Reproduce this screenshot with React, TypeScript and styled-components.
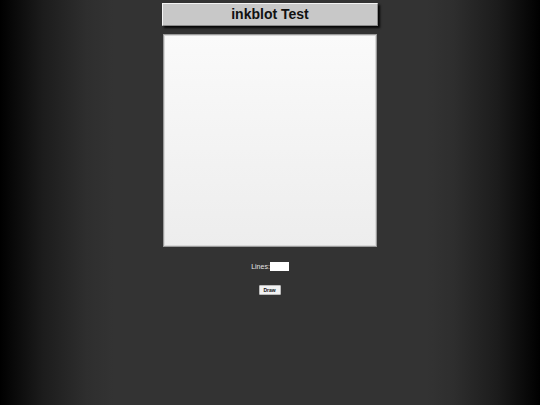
import styled, { createGlobalStyle } from 'styled-components';

const GlobalStyle = createGlobalStyle`
    html, body {
        margin: 0;
        padding: 0;
        min-height: 100%;
    }
    body {
        height: 405px;
        background: linear-gradient(
            to right,
            #000 0%,
            #1c1c1c 8%,
            #2e2e2e 16%,
            #333 21%,
            #333 79%,
            #2e2e2e 84%,
            #1c1c1c 92%,
            #000 100%
        );
        font-family: "Liberation Sans", Arial, sans-serif;
    }
`;

const Page = styled.div`
    display: flex;
    flex-direction: column;
    align-items: center;
    padding-top: 3px;
`;

const Column = styled.div`
    display: flex;
    flex-direction: column;
    align-items: center;
    width: 216px;
`;

const TitleBar = styled.h1`
    box-sizing: border-box;
    width: 216px;
    height: 23px;
    margin: 0;
    background: #c8c8c8;
    border-top: 1px solid #f4f4f4;
    border-left: 1px solid #f4f4f4;
    border-right: 1px solid #8a8a8a;
    border-bottom: 1px solid #8a8a8a;
    box-shadow: 2px 2px 2px rgba(0, 0, 0, 0.9);
    font-size: 14px;
    font-weight: bold;
    line-height: 21px;
    text-align: center;
    color: #111;
`;

const Canvas = styled.div`
    box-sizing: border-box;
    width: 214px;
    height: 213px;
    margin-top: 8px;
    margin-left: -1px;
    background: linear-gradient(to bottom, #fafafa 0%, #ededed 100%);
    border: 1px solid #9a9a9a;
    box-shadow: inset 0 0 0 1px #d8d8d8;
`;

const Controls = styled.form`
    display: flex;
    flex-direction: column;
    align-items: center;
    gap: 14px;
    margin-top: 15px;
`;

const Field = styled.label`
    display: flex;
    align-items: center;
    font-size: 7px;
    color: #e6e6e6;
`;

const LinesInput = styled.input`
    box-sizing: border-box;
    width: 19px;
    height: 9px;
    margin: 0;
    padding: 0;
    border: none;
    background: #fff;
`;

const DrawButton = styled.button`
    box-sizing: border-box;
    width: 22px;
    height: 10px;
    margin-left: -1px;
    padding: 0;
    background: #f2f2f2;
    border: 1px solid #bbb;
    border-radius: 1px;
    font-family: "Liberation Sans", Arial, sans-serif;
    font-size: 5px;
    font-weight: bold;
    line-height: 8px;
    color: #111;
`;

export default function App() {
    return (
        <>
            <GlobalStyle />
            <Page>
                <Column>
                    <TitleBar>inkblot Test</TitleBar>
                    <Canvas />
                    <Controls onSubmit={(e) => e.preventDefault()}>
                        <Field>
                            Lines:<LinesInput type="text" />
                        </Field>
                        <DrawButton type="button">Draw</DrawButton>
                    </Controls>
                </Column>
            </Page>
        </>
    );
}
